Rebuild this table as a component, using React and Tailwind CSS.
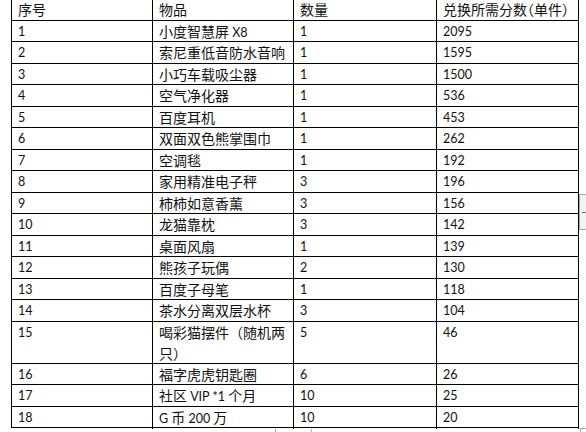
import React from "react";

const rows = [
  ["1", <>小度智慧屏 <L>X8</L></>, "1", "2095"],
  ["2", "索尼重低音防水音响", "1", "1595"],
  ["3", "小巧车载吸尘器", "1", "1500"],
  ["4", "空气净化器", "1", "536"],
  ["5", "百度耳机", "1", "453"],
  ["6", "双面双色熊掌围巾", "1", "262"],
  ["7", "空调毯", "1", "192"],
  ["8", "家用精准电子秤", "3", "196"],
  ["9", "柿柿如意香薰", "3", "156"],
  ["10", "龙猫靠枕", "3", "142"],
  ["11", "桌面风扇", "1", "139"],
  ["12", "熊孩子玩偶", "2", "130"],
  ["13", "百度子母笔", "1", "118"],
  ["14", "茶水分离双层水杯", "3", "104"],
  ["15", "喝彩猫摆件（随机两只）", "5", "46", true],
  ["16", "福字虎虎钥匙圈", "6", "26"],
  ["17", <>社区 <L>VIP *1</L> 个月</>, "10", "25"],
  ["18", <><L>G</L> 币 <L>200</L> 万</>, "10", "20"],
];

function L({ children }) {
  return <span className="text-[12.5px] [font-family:Lato,'Noto_Sans_CJK_SC',sans-serif]">{children}</span>;
}

const cjk = "[font-family:'Noto_Sans_CJK_SC',sans-serif] text-[14px]";
const num = "[font-family:Lato,sans-serif] text-[12.5px]";

function Row({ cells, tall, header }) {
  const h = tall ? "h-[42px]" : header ? "h-[21.5px]" : "h-[21.5px]";
  return (
    <div className={`grid grid-cols-[141px_141px_143px_142px] border-b border-black ${h}`}>
      {cells.map((c, i) => {
        const isCjk = header || i === 1;
        return (
          <div
            key={i}
            className={`border-r border-black pl-[6px] pr-[6px] leading-[21px] text-[#111] ${isCjk ? cjk : num} ${header ? "whitespace-nowrap [font-feature-settings:'halt']" : ""}`}
          >
            {c}
          </div>
        );
      })}
    </div>
  );
}

export default function App() {
  return (
    <div className="relative w-[586px] h-[432px] overflow-hidden bg-white">
      <div className="mt-[-2px] ml-[11px] w-[568px] border-l border-t border-black flex flex-col">
        <Row header cells={["序号", "物品", "数量", "兑换所需分数（单件）"]} />
        {rows.map((r) => (
          <Row key={r[0]} cells={[r[0], r[1], r[2], r[3]]} tall={r[4]} />
        ))}
      </div>
      <div className="absolute left-[579px] top-[194px] w-[10px] h-[36px] border border-[#a6a6a6] bg-[#f3f3f3]">
        <div className="absolute left-[2px] top-[17px] w-[4px] h-[1px] bg-[#777]" />
      </div>
      <div className="absolute left-[275px] top-[429px] w-[1px] h-[3px] bg-[#aaa]" />
      <div className="absolute left-[311px] top-[429px] w-[1px] h-[3px] bg-[#aaa]" />
      <div className="absolute left-[580px] top-[428px] w-[6px] h-[4px] border-l border-t border-[#aaa]" />
    </div>
  );
}
